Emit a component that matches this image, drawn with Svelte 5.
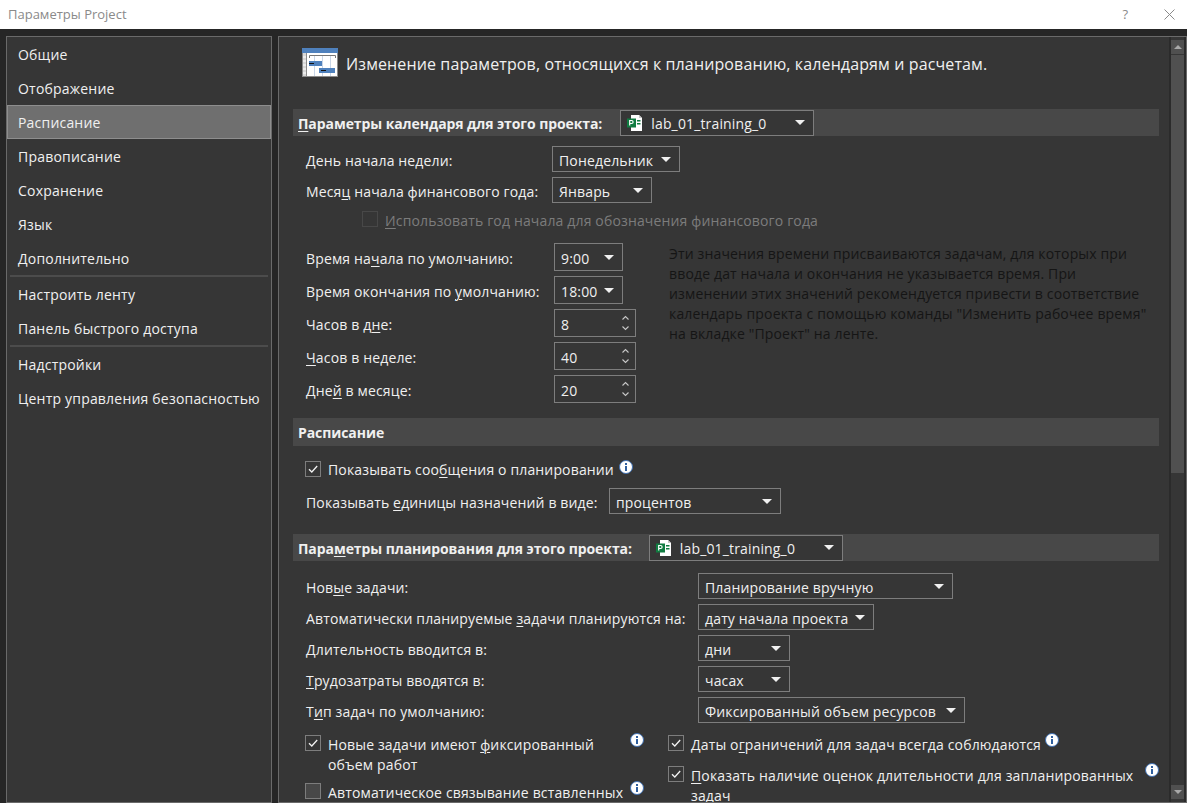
<script>
  const fileName = "lab_01_training_0";
</script>

{#snippet u(before, letter, after)}{before}<span class="ul">{letter}</span>{after}{/snippet}

{#snippet arrow()}<span class="arrow"></span>{/snippet}

{#snippet sel(text, cls)}
  <div class="sel {cls}"><span class="txt">{text}</span>{@render arrow()}</div>
{/snippet}

{#snippet spin(text)}
  <div class="sel spin"><span class="txt">{text}</span>
    <span class="spinbtns">
      <svg width="9" height="6" viewBox="0 0 9 6"><path d="M1.5 4.5 4.5 1.5 7.5 4.5" fill="none" stroke="#c8c8c8" stroke-width="1.1"/></svg>
      <svg width="9" height="6" viewBox="0 0 9 6"><path d="M1.5 1.5 4.5 4.5 7.5 1.5" fill="none" stroke="#c8c8c8" stroke-width="1.1"/></svg>
    </span>
  </div>
{/snippet}

{#snippet check(on, cls = "")}
  <span class="check {cls}">
    {#if on}<svg width="14" height="14" viewBox="0 0 14 14"><path d="M3 7.2 5.8 10 11.2 4" fill="none" stroke="#f2f2f2" stroke-width="1.3"/></svg>{/if}
  </span>
{/snippet}

{#snippet info(cls = "")}
  <svg class="info {cls}" width="14" height="14" viewBox="0 0 14 14">
    <circle cx="7" cy="7" r="6.5" fill="#fff"/>
    <circle cx="7" cy="7" r="6.5" fill="none" stroke="#3f6fb0" stroke-width="1"/>
    <rect x="6" y="3" width="2" height="2" fill="#2f5f9f"/>
    <rect x="6" y="6" width="2" height="5" fill="#2f5f9f"/>
  </svg>
{/snippet}

{#snippet pfile()}
  <svg class="pfile" width="18" height="18" viewBox="0 0 18 18">
    <path d="M5 1h8l3 3v13H5z" fill="#fff"/>
    <path d="M13 1l3 3h-3z" fill="#c8c8c8"/>
    <rect x="11" y="6" width="3.5" height="1.5" fill="#107c41"/>
    <rect x="11" y="9" width="3.5" height="1.5" fill="#107c41"/>
    <rect x="1" y="4.5" width="9" height="9" fill="#107c41"/>
    <path d="M3.7 11.5V6.5h1.9a1.5 1.5 0 0 1 0 3H3.7" fill="none" stroke="#fff" stroke-width="1.2"/>
  </svg>
{/snippet}

{#snippet filesel()}
  <div class="sel filesel">
    {@render pfile()}<span class="fname txt">{fileName}</span>{@render arrow()}
  </div>
{/snippet}

<div class="window">
  <header class="titlebar">
    <span class="title">Параметры Project</span>
    <span class="help">?</span>
    <svg class="close" width="11" height="11" viewBox="0 0 11 11"><path d="M.5.5 10.5 10.5M10.5.5.5 10.5" stroke="#8a8a8a" stroke-width="1"/></svg>
  </header>

  <div class="body">
    <nav class="side">
      <div class="item">Общие</div>
      <div class="item">Отображение</div>
      <div class="item active">Расписание</div>
      <div class="item">Правописание</div>
      <div class="item">Сохранение</div>
      <div class="item">Язык</div>
      <div class="item">Дополнительно</div>
      <div class="sep"></div>
      <div class="item">Настроить ленту</div>
      <div class="item">Панель быстрого доступа</div>
      <div class="sep"></div>
      <div class="item">Надстройки</div>
      <div class="item">Центр управления безопасностью</div>
    </nav>

    <main class="main">
      <div class="content">
        <div class="intro">
          <svg width="36" height="30" viewBox="0 0 36 30">
            <rect x="0" y="0" width="36" height="29" fill="#8c8c8c"/>
            <rect x="1" y="5" width="34" height="23" fill="#fff"/>
            <rect x="0" y="0" width="36" height="5" fill="#4f81bd"/>
            <rect x="1" y="5" width="3" height="23" fill="#d8d8d8"/>
            <path d="M1 9h3M1 13h3M1 17h3M1 21h3M1 25h3" stroke="#fff"/>
            <rect x="4" y="5" width="1" height="23" fill="#8c8c8c"/>
            <path d="M12.5 8V28M20.5 8V28M28.5 8V28" stroke="#c9d6e8"/>
            <path d="M7.5 10V7.5H33.5V10" stroke="#777" fill="none"/>
            <rect x="7" y="13" width="13" height="5" fill="#4f81bd"/>
            <rect x="17" y="20" width="16" height="5" fill="#4f81bd"/>
            <rect x="7" y="15" width="5" height="1" fill="#111"/>
            <rect x="19" y="22" width="5" height="1" fill="#111"/>
          </svg>
          <span class="intro-text">Изменение параметров, относящихся к планированию, календарям и расчетам.</span>
        </div>

        <div class="bar first">
          <b>{@render u("", "П", "араметры календаря для этого проекта:")}</b>
          {@render filesel()}
        </div>

        <div class="row r1"><span class="lab l-week">{@render u("", "Д", "ень начала недели:")}</span>{@render sel("Понедельник", "w-128")}</div>
        <div class="row r2"><span class="lab l-week">{@render u("Меся", "ц", " начала финансового года:")}</span>{@render sel("Январь", "w-100")}</div>
        <div class="row fy">{@render check(false, "dis")}<span class="distext">{@render u("", "И", "спользовать год начала для обозначения финансового года")}</span></div>

        <div class="times">
          <div class="tleft">
            <div class="row t"><span class="lab l-time">{@render u("Время на", "ч", "ала по умолчанию:")}</span>{@render sel("9:00", "w-69")}</div>
            <div class="row t"><span class="lab l-time">{@render u("Время окончания по ", "у", "молчанию:")}</span>{@render sel("18:00", "w-69")}</div>
            <div class="row t"><span class="lab l-time">{@render u("Часов в д", "н", "е:")}</span>{@render spin("8")}</div>
            <div class="row t"><span class="lab l-time">{@render u("", "Ч", "асов в неделе:")}</span>{@render spin("40")}</div>
            <div class="row t"><span class="lab l-time">{@render u("Дне", "й", " в месяце:")}</span>{@render spin("20")}</div>
          </div>
          <p class="note">Эти значения времени присваиваются задачам, для которых при вводе дат начала и окончания не указывается время. При изменении этих значений рекомендуется привести в соответствие календарь проекта с помощью команды "Изменить рабочее время" на вкладке "Проект" на ленте.</p>
        </div>

        <div class="bar plain"><b>Расписание</b></div>

        <div class="row msg">{@render check(true)}<span class="ctext">{@render u("Показывать соо", "б", "щения о планировании")}</span>{@render info("raised")}</div>
        <div class="row units"><span class="lab l-units">{@render u("Показывать ", "е", "диницы назначений в виде:")}</span>{@render sel("процентов", "w-172")}</div>

        <div class="bar second">
          <b>{@render u("Пара", "м", "етры планирования для этого проекта:")}</b>
          {@render filesel()}
        </div>

        <div class="row p first-p"><span class="lab l-plan">{@render u("Нов", "ы", "е задачи:")}</span>{@render sel("Планирование вручную", "w-255")}</div>
        <div class="row p"><span class="lab l-plan">{@render u("Автоматически планируемые ", "з", "адачи планируются на:")}</span>{@render sel("дату начала проекта", "w-176")}</div>
        <div class="row p"><span class="lab l-plan">{@render u("", "Д", "лительность вводится в:")}</span>{@render sel("дни", "w-92")}</div>
        <div class="row p"><span class="lab l-plan">{@render u("", "Т", "рудозатраты вводятся в:")}</span>{@render sel("часах", "w-92")}</div>
        <div class="row p"><span class="lab l-plan">{@render u("Т", "и", "п задач по умолчанию:")}</span>{@render sel("Фиксированный объем ресурсов", "w-267")}</div>

        <div class="cols">
          <div class="col cl">
            <div class="citem h48">{@render check(true)}<span class="ctext w-wrap1">{@render u("Новые задачи имеют ", "ф", "иксированный объем работ")}</span>{@render info("at-l")}</div>
            <div class="citem">{@render check(false, "empty")}<span class="ctext nowrap">Автоматическое связывание вставленных</span>{@render info("at-l")}</div>
          </div>
          <div class="col cr">
            <div class="citem h31">{@render check(true)}<span class="ctext nowrap">{@render u("Даты о", "г", "раничений для задач всегда соблюдаются")}</span>{@render info("inline")}</div>
            <div class="citem">{@render check(true)}<span class="ctext w-wrap2">{@render u("", "П", "оказать наличие оценок длительности для запланированных задач")}</span>{@render info("at-r")}</div>
          </div>
        </div>
      </div>

      <div class="scroll">
        <div class="sbtn"><span class="up"></span></div>
        <div class="thumb"></div>
        <div class="track"></div>
        <div class="sbtn"><span class="down"></span></div>
      </div>
    </main>
  </div>
</div>

<style>
  :global(body) {
    margin: 0;
    background: #262626;
    overflow: hidden;
  }
  .window {
    width: 1187px;
    height: 803px;
    display: flex;
    flex-direction: column;
    font-family: "Open Sans", "Noto Sans", sans-serif;
    font-size: 14px;
    color: #f0f0f0;
    overflow: hidden;
  }
  .titlebar {
    height: 29px;
    flex: none;
    box-sizing: border-box;
    background: #fff;
    display: flex;
    align-items: center;
    padding: 0 0 1px 8px;
    color: #8a8a8a;
    font-size: 13px;
  }
  .title { flex: 1; }
  .help { margin-right: 36px; font-size: 13px; color: #8a8a8a; }
  .close { margin-right: 12px; }
  .body {
    flex: 1;
    min-height: 0;
    display: flex;
    gap: 6px;
    padding: 7px 0 0 6px;
    background: #262626;
  }
  .side {
    width: 264px;
    flex: none;
    background: #363636;
    border: 1px solid #6a6a6a;
    display: flex;
    flex-direction: column;
  }
  .item {
    height: 34px;
    line-height: 36px;
    padding-left: 11px;
    box-sizing: border-box;
    letter-spacing: 0.2px;
  }
  .item.active {
    background: #6f6f6f;
    border: 1px solid #8e8e8e;
    line-height: 34px;
    padding-left: 10px;
  }
  .sep {
    height: 2px;
    margin: 0 3px;
    background: #4c4c4c;
  }
  .main {
    flex: 1;
    min-width: 0;
    background: #363636;
    border: 1px solid #6a6a6a;
    display: flex;
    overflow: hidden;
  }
  .content {
    flex: 1;
    min-width: 0;
    padding: 0 10px 0 14px;
    letter-spacing: 0.15px;
  }
  .intro {
    display: flex;
    align-items: center;
    gap: 8px;
    height: 30px;
    margin: 11px 0 0 9px;
  }
  .intro-text { font-size: 16px; letter-spacing: 0.12px; white-space: nowrap; padding-top: 2px; }
  .bar {
    background: #484848;
    height: 27px;
    display: flex;
    align-items: center;
    padding-left: 5px;
    gap: 17px;
  }
  .bar.first { margin-top: 31px; gap: 18px; }
  .bar.plain { margin-top: 15px; height: 28px; }
  .bar.second { margin-top: 20px; }
  .bar b { font-weight: 700; letter-spacing: -0.08px; white-space: nowrap; padding-top: 1px; }
  .ul { text-decoration: underline; text-underline-offset: 2px; text-decoration-thickness: 1px; }

  .row {
    display: flex;
    align-items: center;
    padding-left: 13px;
  }
  .lab { white-space: nowrap; flex: none; padding-top: 2px; }
  .txt { padding-top: 2px; }
  .r1 { margin-top: 10px; }
  .r2 { margin-top: 5px; }
  .fy { margin-top: 8px; padding-left: 69px; height: 16px; gap: 7px; }
  .distext { color: #7c7c7c; white-space: nowrap; padding-top: 2px; }
  .l-week { width: 246px; }
  .l-time { width: 248px; }
  .l-units { width: 303px; }
  .l-plan { width: 392px; }

  .sel {
    height: 26px;
    box-sizing: border-box;
    border: 1px solid #7d7d7d;
    display: flex;
    align-items: center;
    justify-content: space-between;
    padding: 0 6px;
    white-space: nowrap;
    flex: none;
  }
  .arrow {
    width: 0;
    height: 0;
    border-left: 5px solid transparent;
    border-right: 5px solid transparent;
    border-top: 5px solid #f0f0f0;
    flex: none;
    margin-right: 2px;
  }
  .filesel {
    width: 194px;
    background: #363636;
    padding-left: 5px;
    justify-content: flex-start;
  }
  .pfile { flex: none; }
  .fname { margin-left: 7px; flex: 1; }
  .w-128 { width: 128px; }
  .w-100 { width: 100px; }
  .w-69 { width: 69px; height: 28px; }
  .w-172 { width: 172px; }
  .w-255 { width: 255px; }
  .w-176 { width: 176px; }
  .w-92 { width: 92px; }
  .w-267 { width: 267px; }
  .spin { width: 82px; height: 28px; }
  .spinbtns { display: flex; flex-direction: column; gap: 4px; margin-right: -1px; }
  .spinbtns svg { display: block; }

  .times { display: flex; margin-top: 16px; }
  .tleft { display: flex; flex-direction: column; gap: 5px; width: 376px; flex: none; }
  .note {
    margin: 1px 0 0;
    color: #151515;
    line-height: 20px;
    width: 486px;
  }

  .check {
    width: 16px;
    height: 16px;
    box-sizing: border-box;
    border: 1px solid #7d7d7d;
    flex: none;
    display: flex;
    align-items: center;
    justify-content: center;
  }
  .check.dis { border-color: #484848; }
  .check.empty { background: #484848; }
  .check svg { display: block; }
  .ctext { margin-left: 7px; line-height: 20px; padding-top: 1px; }
  .msg { margin-top: 15px; padding-left: 12px; height: 16px; }
  .msg .ctext { padding-top: 2px; }
  .info { flex: none; }
  .info.raised { margin: -4px 0 0 5px; }
  .units { margin-top: 11px; }

  .p { height: 26px; margin-top: 5px; }
  .first-p { margin-top: 12px; }

  .cols { display: flex; margin-top: 11px; }
  .col { flex: none; }
  .cl { width: 375px; padding-left: 12px; box-sizing: border-box; }
  .cr { flex: 1; }
  .citem { display: flex; align-items: flex-start; position: relative; }
  .citem .check { margin-top: 1px; }
  .h48 { height: 48px; }
  .h31 { height: 31px; }
  .w-wrap1 { width: 285px; }
  .w-wrap2 { width: 450px; }
  .nowrap { white-space: nowrap; }
  .info.at-l { position: absolute; left: 325px; top: -1px; }
  .info.at-r { position: absolute; left: 477px; top: -2px; }
  .info.inline { margin: -1px 0 0 4px; }

  .scroll {
    width: 17px;
    flex: none;
    background: #363636;
    border-left: 2px solid #2b2b2b;
    border-right: 2px solid #2b2b2b;
    display: flex;
    flex-direction: column;
    padding: 3px 0;
    box-sizing: border-box;
    gap: 1px;
  }
  .sbtn {
    height: 14px;
    background: #505050;
    display: flex;
    align-items: center;
    justify-content: center;
    flex: none;
  }
  .up, .down {
    width: 0;
    height: 0;
    border-left: 4px solid transparent;
    border-right: 4px solid transparent;
  }
  .up { border-bottom: 4px solid #a8a8a8; }
  .down { border-top: 4px solid #a8a8a8; }
  .thumb { height: 418px; background: #505050; flex: none; }
  .track { flex: 1; }
</style>
